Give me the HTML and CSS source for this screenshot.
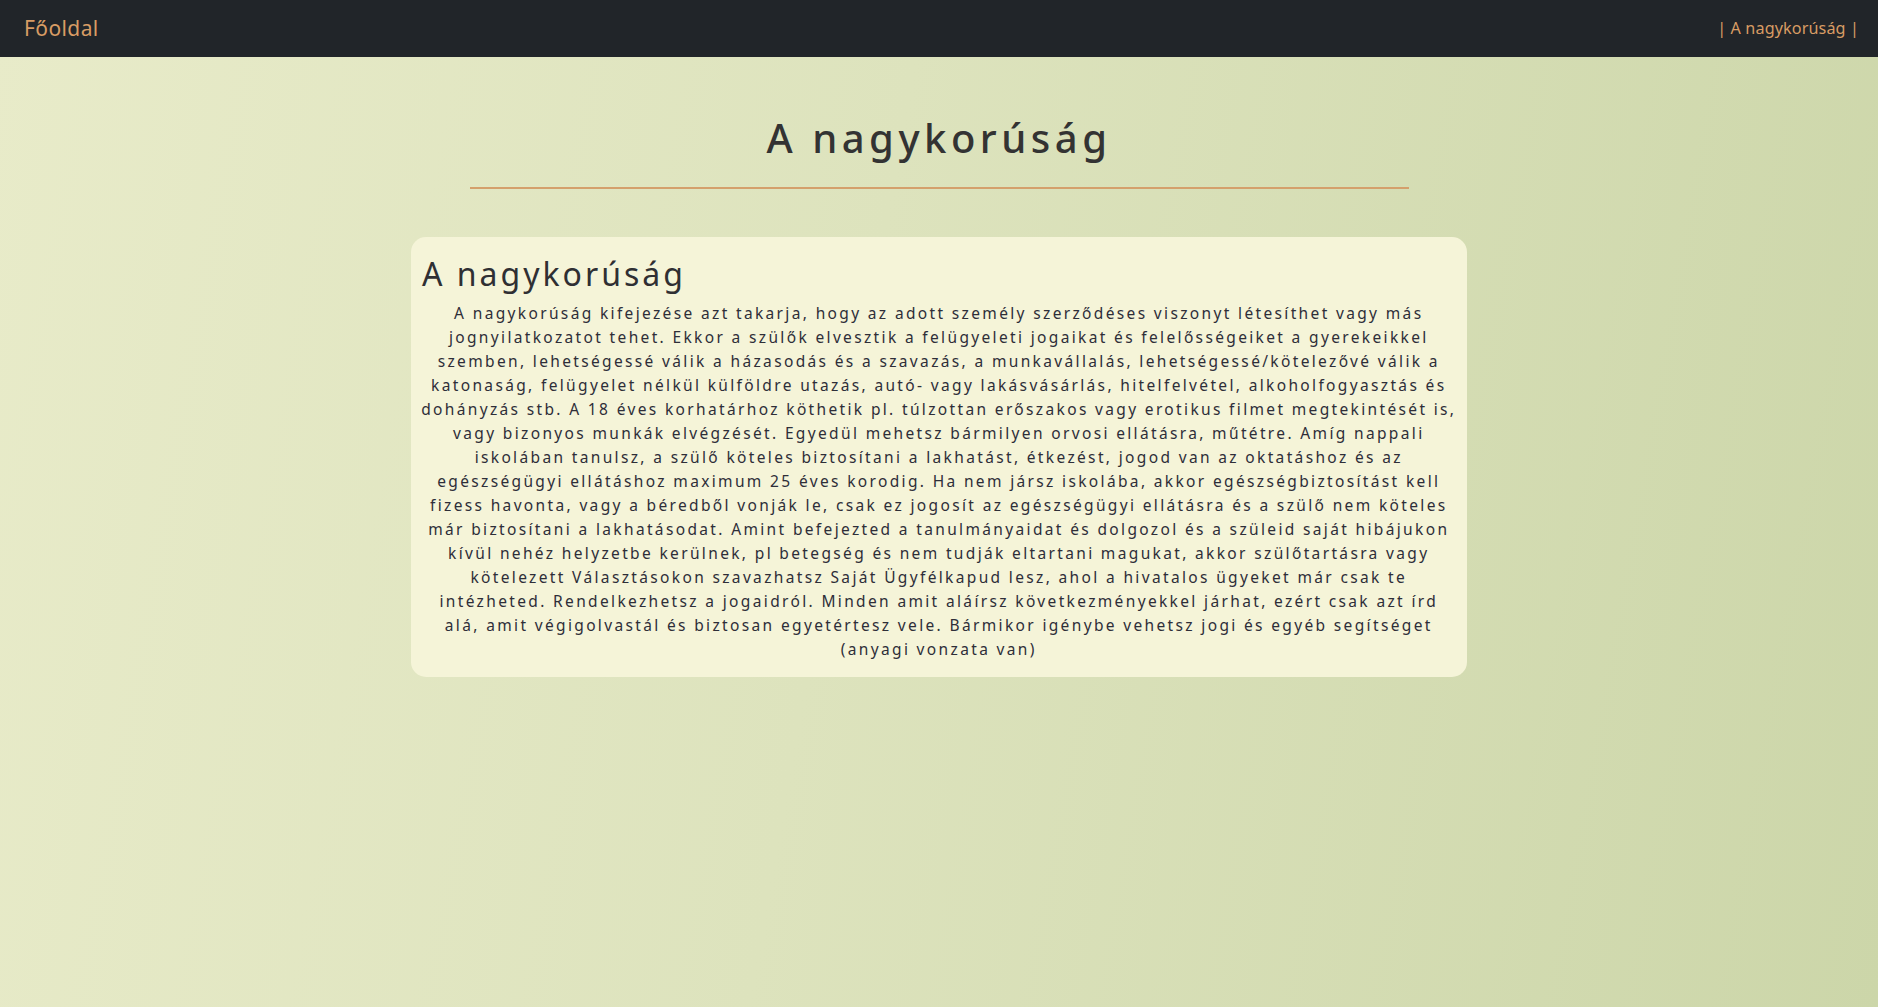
FILE: index.html
```html
<!DOCTYPE html>
<html lang="hu">
<head>
<meta charset="utf-8">
<title>A nagykorúság</title>
<link rel="stylesheet" href="styles.css">
</head>
<body>
<nav class="navbar">
  <a class="brand" href="#">Főoldal</a>
  <a class="nav-link" href="#">| A nagykorúság |</a>
</nav>
<main class="page">
  <h1 class="page-title">A nagykorúság</h1>
  <hr class="divider">
  <section class="card">
    <h2 class="card-title">A nagykorúság</h2>
    <p class="card-text">A nagykorúság kifejezése azt takarja, hogy az adott személy szerződéses viszonyt létesíthet vagy más jognyilatkozatot tehet. Ekkor a szülők elvesztik a felügyeleti jogaikat és felelősségeiket a gyerekeikkel szemben, lehetségessé válik a házasodás és a szavazás, a munkavállalás, lehetségessé/kötelezővé válik a katonaság, felügyelet nélkül külföldre utazás, autó- vagy lakásvásárlás, hitelfelvétel, alkoholfogyasztás és dohányzás stb. A 18 éves korhatárhoz köthetik pl. túlzottan erőszakos vagy erotikus filmet megtekintését is, vagy bizonyos munkák elvégzését. Egyedül mehetsz bármilyen orvosi ellátásra, műtétre. Amíg nappali iskolában tanulsz, a szülő köteles biztosítani a lakhatást, étkezést, jogod van az oktatáshoz és az egészségügyi ellátáshoz maximum 25 éves korodig. Ha nem jársz iskolába, akkor egészségbiztosítást kell fizess havonta, vagy a béredből vonják le, csak ez jogosít az egészségügyi ellátásra és a szülő nem köteles már biztosítani a lakhatásodat. Amint befejezted a tanulmányaidat és dolgozol és a szüleid saját hibájukon kívül nehéz helyzetbe kerülnek, pl betegség és nem tudják eltartani magukat, akkor szülőtartásra vagy kötelezett Választásokon szavazhatsz Saját Ügyfélkapud lesz, ahol a hivatalos ügyeket már csak te intézheted. Rendelkezhetsz a jogaidról. Minden amit aláírsz következményekkel járhat, ezért csak azt írd alá, amit végigolvastál és biztosan egyetértesz vele. Bármikor igénybe vehetsz jogi és egyéb segítséget (anyagi vonzata van)</p>
  </section>
</main>
</body>
</html>
```

FILE: styles.css
```css
* { box-sizing: border-box; }
html, body { margin: 0; padding: 0; }
body {
  font-family: "Noto Sans", "Open Sans", sans-serif;
  color: #2f2f33;
  min-height: 1007px;
  background: linear-gradient(100deg, #e8ebc9 0%, #dde3bd 45%, #ccd6a9 100%);
}
.navbar {
  height: 57px;
  background: #212529;
  display: flex;
  align-items: center;
  justify-content: space-between;
  padding: 0 19px 0 24px;
}
.brand {
  color: #d89c64;
  text-decoration: none;
  font-size: 21px;
  letter-spacing: 0.4px;
  margin-top: -1px;
}
.nav-link {
  color: #d89c64;
  text-decoration: none;
  font-size: 16.2px;
  letter-spacing: 0.1px;
  margin-top: -2px;
}
.page {
  display: flex;
  flex-direction: column;
  align-items: center;
}
.page-title {
  margin: 53px 0 0;
  font-size: 40px;
  font-weight: 500;
  letter-spacing: 4.5px;
  line-height: 56px;
  color: #333;
}
.divider {
  width: 939px;
  margin: 21px 0 0;
  border: 0;
  height: 2px;
  background: #d4a06c;
}
.card {
  margin-top: 48px;
  width: 1056px;
  background: #f5f4d8;
  border-radius: 15px;
  padding: 17px 10px 16px 9.5px;
}
.card-title {
  margin: 0;
  padding-left: 1.5px;
  font-size: 32px;
  font-weight: 400;
  letter-spacing: 3px;
  line-height: 40px;
  color: #2f2f33;
}
.card-text {
  margin: 7px 0 0;
  text-align: center;
  font-size: 15.5px;
  line-height: 24px;
  letter-spacing: 2.35px;
  color: #2e2e38;
}
```
